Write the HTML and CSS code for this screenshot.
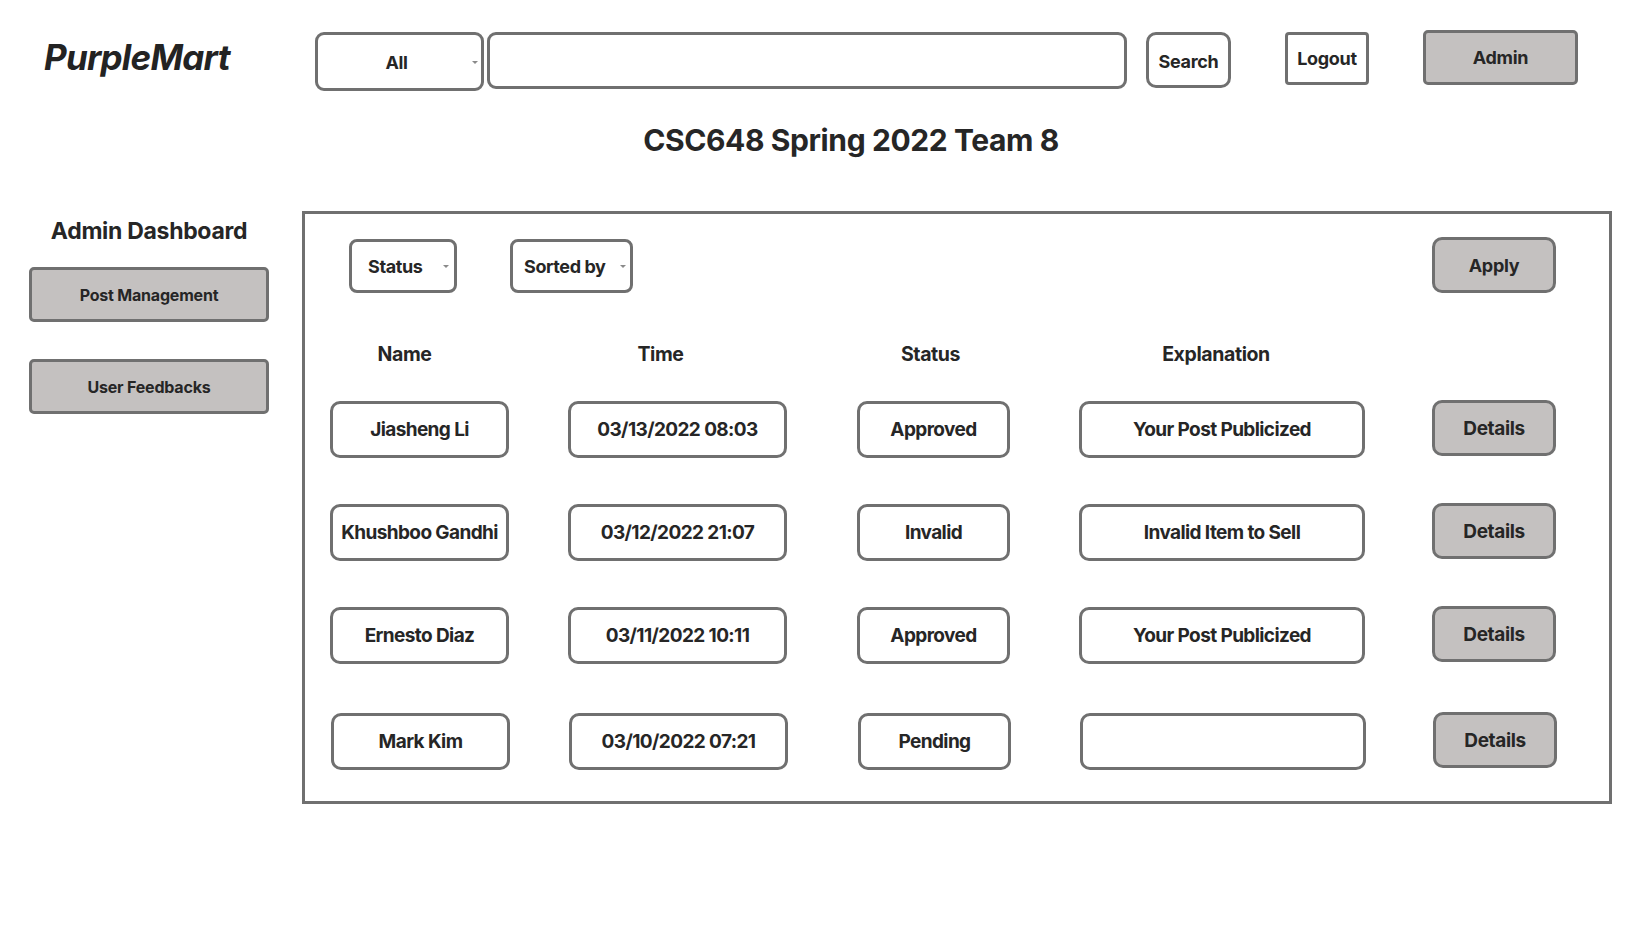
FILE: index.html
```html
<!DOCTYPE html>
<html lang="en">
<head>
<meta charset="utf-8">
<title>PurpleMart Admin Dashboard</title>
<link rel="stylesheet" href="styles.css">
</head>
<body>
<header class="topbar">
  <div class="logo">PurpleMart</div>
  <div class="select select-all"><span>All</span><i class="caret"></i></div>
  <div class="search-input"></div>
  <button class="btn btn-search">Search</button>
  <button class="btn btn-logout">Logout</button>
  <button class="btn btn-admin">Admin</button>
</header>
<h1 class="page-title">CSC648 Spring 2022 Team 8</h1>
<main class="content">
  <aside class="sidebar">
    <h2 class="side-title">Admin Dashboard</h2>
    <button class="side-btn">Post Management</button>
    <button class="side-btn">User Feedbacks</button>
  </aside>
  <section class="panel">
    <div class="filters">
      <div class="select select-status"><span>Status</span><i class="caret"></i></div>
      <div class="select select-sort"><span>Sorted by</span><i class="caret"></i></div>
      <button class="btn-apply">Apply</button>
    </div>
    <div class="table">
      <div class="th th-name">Name</div>
      <div class="th th-time">Time</div>
      <div class="th th-status">Status</div>
      <div class="th th-expl">Explanation</div>
      <div class="th th-empty"></div>

      <div class="cell c-name">Jiasheng Li</div>
      <div class="cell c-time">03/13/2022 08:03</div>
      <div class="cell c-status">Approved</div>
      <div class="cell c-expl">Your Post Publicized</div>
      <button class="details">Details</button>

      <div class="cell c-name">Khushboo Gandhi</div>
      <div class="cell c-time">03/12/2022 21:07</div>
      <div class="cell c-status">Invalid</div>
      <div class="cell c-expl">Invalid Item to Sell</div>
      <button class="details">Details</button>

      <div class="cell c-name">Ernesto Diaz</div>
      <div class="cell c-time">03/11/2022 10:11</div>
      <div class="cell c-status">Approved</div>
      <div class="cell c-expl">Your Post Publicized</div>
      <button class="details">Details</button>

      <div class="cell c-name last">Mark Kim</div>
      <div class="cell c-time last">03/10/2022 07:21</div>
      <div class="cell c-status last">Pending</div>
      <div class="cell c-expl last"></div>
      <button class="details last">Details</button>
    </div>
  </section>
</main>
</body>
</html>
```
FILE: styles.css
```css
* { box-sizing: border-box; }
html, body { margin: 0; padding: 0; background: #fff; }
body {
  font-family: Inter, "Liberation Sans", Arial, sans-serif;
  color: #262626;
  width: 1649px;
  height: 929px;
  overflow: hidden;
}
button { font-family: inherit; color: inherit; cursor: pointer; }

/* ---------- top bar ---------- */
.topbar {
  display: flex;
  align-items: flex-start;
  padding: 32px 0 0 44px;
}
.logo {
  width: 271px;
  height: 50px;
  line-height: 50px;
  font-size: 35px;
  font-weight: 700;
  font-style: italic;
  letter-spacing: -0.8px;
  color: #232323;
  margin-top: 0;
}
.select {
  position: relative;
  border: 3px solid #707070;
  border-radius: 9px;
  background: #fff;
  display: flex;
  align-items: center;
  font-weight: 700;
  font-size: 18px;
  letter-spacing: -0.4px;
}
.caret {
  position: absolute;
  top: 50%;
  width: 0; height: 0;
  border-left: 3px solid transparent;
  border-right: 3px solid transparent;
  border-top: 3px solid #8a8a8a;
  margin-top: -1px;
}
.select-all {
  width: 169px;
  height: 59px;
  justify-content: center;
}
.select-all span { margin-left: -6px; margin-top: 2px; }
.select-all .caret { right: 3px; }
.search-input {
  width: 640px;
  height: 57px;
  margin-left: 3px;
  border: 3px solid #707070;
  border-radius: 9px;
}
.btn {
  background: #fff;
  border: 3px solid #707070;
  font-weight: 700;
  font-size: 18px;
  letter-spacing: -0.3px;
  padding: 0;
}
.btn-search {
  width: 85px;
  height: 56px;
  margin-left: 19px;
  border-radius: 10px;
  padding-top: 2px;
}
.btn-logout {
  width: 84px;
  height: 53px;
  margin-left: 54px;
  border-radius: 4px;
}
.btn-admin {
  width: 155px;
  height: 55px;
  margin-left: 54px;
  margin-top: -2px;
  border-radius: 5px;
  background: #c4c1c0;
}

.page-title {
  margin: 31px 0 0 0;
  text-align: center;
  font-size: 30px;
  line-height: 36px;
  font-weight: 700;
  letter-spacing: -0.4px;
  color: #262626;
  padding-left: 53px;
}

/* ---------- main ---------- */
.content {
  display: flex;
  align-items: flex-start;
  margin-top: 53px;
  padding-left: 29px;
}
.sidebar {
  width: 240px;
  margin-right: 33px;
  display: flex;
  flex-direction: column;
  align-items: center;
}
.side-title {
  margin: 6px 0 0 0;
  font-size: 23px;
  line-height: 28px;
  font-weight: 700;
  letter-spacing: -0.3px;
  color: #262626;
}
.side-btn {
  width: 240px;
  height: 55px;
  margin-top: 22px;
  background: #c4c1c0;
  border: 3px solid #707070;
  border-radius: 5px;
  font-size: 16px;
  font-weight: 700;
  letter-spacing: -0.2px;
  padding: 0;
}
.side-btn + .side-btn { margin-top: 37px; }

.panel {
  width: 1310px;
  height: 593px;
  border: 3px solid #707070;
  padding: 25px 0 0 0;
}
.filters {
  display: flex;
  align-items: flex-start;
  padding-left: 44px;
}
.select-status {
  width: 108px;
  height: 54px;
  padding-left: 16px;
  border-radius: 8px;
}
.select-status .caret { right: 5px; }
.select-sort {
  width: 123px;
  height: 54px;
  margin-left: 53px;
  padding-left: 11px;
  border-radius: 8px;
}
.select-sort .caret { right: 4px; }
.btn-apply {
  margin-left: auto;
  margin-right: 53px;
  margin-top: -2px;
  width: 124px;
  height: 56px;
  background: #c4c1c0;
  border: 3px solid #707070;
  border-radius: 10px;
  font-size: 18px;
  font-weight: 700;
  letter-spacing: -0.3px;
  padding: 0;
}

/* ---------- table ---------- */
.table {
  margin: 49px 0 0 25px;
  display: grid;
  grid-template-columns: 179px 278px 223px 355px 191px;
  grid-template-rows: 13px;
  grid-auto-rows: 57px;
  row-gap: 46px;
}
.th {
  justify-self: end;
  align-self: start;
  height: 24px;
  text-align: center;
  font-size: 19.5px;
  line-height: 24px;
  font-weight: 700;
  letter-spacing: -0.4px;
}
.th-name { width: 179px; padding-right: 30px; }
.th-time { width: 219px; padding-right: 34px; }
.th-status { width: 153px; padding-right: 6px; }
.th-expl { width: 286px; padding-right: 12px; }
.th-empty { width: 124px; }

.cell, .details {
  justify-self: end;
  height: 57px;
  border: 3px solid #707070;
  border-radius: 10px;
  display: flex;
  align-items: center;
  justify-content: center;
  font-size: 19px;
  font-weight: 700;
  letter-spacing: -0.6px;
  background: #fff;
}
.c-name { width: 179px; }
.c-time { width: 219px; }
.c-status { width: 153px; }
.c-expl { width: 286px; }
.details {
  width: 124px;
  height: 56px;
  background: #c4c1c0;
  padding: 0;
  letter-spacing: -0.4px;
  margin-top: -1px;
}
.last { margin-top: 3px; position: relative; left: 1px; }
.details.last { margin-top: 2px; }
```
